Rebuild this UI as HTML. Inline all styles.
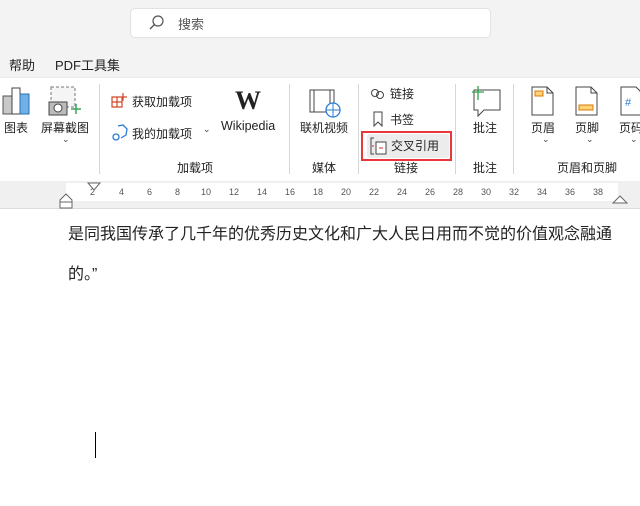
<!DOCTYPE html>
<html><head><meta charset="utf-8"><style>
*{margin:0;padding:0;box-sizing:border-box}
body{width:640px;height:506px;overflow:hidden;background:#fff;font-family:"Liberation Sans","Noto Sans CJK SC",sans-serif;color:#222;position:relative}
.a{position:absolute;white-space:nowrap}
.l{font-size:12px;color:#222}
.sep{position:absolute;width:1px;background:#d6d6d6;top:84px;height:90px}
.chev{font-size:9px;color:#444}
</style></head><body>
<div class="a" style="left:0;top:0;width:640px;height:78px;background:#f3f3f3"></div>
<div class="a" style="left:130px;top:8px;width:361px;height:30px;background:#fff;border:1px solid #e2e2e2;border-radius:5px"></div>
<svg class="a" style="left:148px;top:14px" width="18" height="18" viewBox="0 0 18 18"><circle cx="10" cy="7" r="5" fill="none" stroke="#555" stroke-width="1.2"/><line x1="6.5" y1="10.5" x2="2" y2="15" stroke="#555" stroke-width="1.3"/></svg>
<div class="a" style="left:178px;top:14px;font-size:13px;color:#555">搜索</div>
<div class="a" style="left:9px;top:55px;font-size:13px">帮助</div>
<div class="a" style="left:55px;top:55px;font-size:13px">PDF工具集</div>
<div class="a" style="left:0;top:78px;width:640px;height:103px;background:#fff;box-shadow:0 1px 3px rgba(0,0,0,.2)"></div>
<svg class="a" style="left:2px;top:86px" width="28" height="30"><rect x="1" y="10" width="9" height="18" fill="#c8c8c8" stroke="#555"/><rect x="10" y="2" width="8" height="26" fill="#fff" stroke="#444"/><rect x="18" y="8" width="9" height="20" fill="#6fb0e6" stroke="#2b6cb0"/></svg>
<div class="a l" style="left:4px;top:119px">图表</div>
<svg class="a" style="left:47px;top:86px" width="36" height="32"><rect x="4" y="1" width="24" height="20" fill="#f5f5f5" stroke="#777" stroke-dasharray="3,2"/><rect x="2" y="16" width="18" height="13" fill="#bbb" stroke="#444"/><circle cx="11" cy="22" r="4" fill="#fff" stroke="#444"/><path d="M24 23h10M29 18v10" stroke="#3aa35a" stroke-width="1.5"/></svg>
<div class="a l" style="left:41px;top:119px">屏幕截图</div>
<div class="a chev" style="left:62px;top:134px">⌄</div>
<div class="sep" style="left:99px"></div>
<svg class="a" style="left:111px;top:92px" width="17" height="17"><path d="M1 5h10v10H1zM1 10h10M6 5v10M12 1v8M8 5h8" fill="none" stroke="#d24726" stroke-width="1.2"/></svg>
<div class="a l" style="left:132px;top:93px">获取加载项</div>
<svg class="a" style="left:111px;top:124px" width="18" height="18"><path d="M7 2l5-1 4 4-1 6-5 3" fill="none" stroke="#2b7cd3" stroke-width="1.3"/><circle cx="5" cy="13" r="3" fill="none" stroke="#2b7cd3" stroke-width="1.3"/></svg>
<div class="a l" style="left:132px;top:125px">我的加载项</div>
<div class="a chev" style="left:203px;top:124px">⌄</div>
<div class="a" style="left:235px;top:86px;font-family:'Liberation Serif',serif;font-size:26px;font-weight:bold">W</div>
<div class="a l" style="left:221px;top:119px;font-size:12.5px">Wikipedia</div>
<div class="a l" style="left:177px;top:159px">加载项</div>
<div class="sep" style="left:289px"></div>
<svg class="a" style="left:308px;top:88px" width="34" height="32"><rect x="2" y="2" width="24" height="22" fill="#fff" stroke="#444"/><path d="M6 2v22M22 2v22" stroke="#444"/><circle cx="25" cy="22" r="7" fill="#fff" stroke="#2b7cd3" stroke-width="1.3"/><path d="M18 22h14M25 15v14" stroke="#2b7cd3"/></svg>
<div class="a l" style="left:300px;top:119px">联机视频</div>
<div class="a l" style="left:312px;top:159px">媒体</div>
<div class="sep" style="left:358px"></div>
<svg class="a" style="left:370px;top:88px" width="16" height="12"><circle cx="5" cy="5" r="3.5" fill="none" stroke="#444"/><circle cx="10" cy="7" r="3.5" fill="none" stroke="#444"/></svg>
<div class="a l" style="left:390px;top:85px">链接</div>
<svg class="a" style="left:373px;top:111px" width="10" height="16"><path d="M1 1h8v14l-4-4-4 4z" fill="none" stroke="#444"/></svg>
<div class="a l" style="left:390px;top:111px">书签</div>
<div class="a" style="left:361px;top:131px;width:91px;height:30px;border:2px solid #e8373a"></div>
<div class="a" style="left:367px;top:134px;width:82px;height:24px;background:#ececec;border-radius:3px"></div>
<svg class="a" style="left:370px;top:137px" width="18" height="18"><path d="M4 1h-3v16h3" fill="none" stroke="#444"/><rect x="6" y="5" width="10" height="12" fill="#fff" stroke="#444"/><path d="M9 11h4M2 9h2" stroke="#d23"/></svg>
<div class="a l" style="left:391px;top:137px">交叉引用</div>
<div class="a l" style="left:394px;top:159px">链接</div>
<div class="sep" style="left:455px"></div>
<svg class="a" style="left:468px;top:84px" width="34" height="34"><path d="M6 6h26v20H16l-6 6v-6H6z" fill="#fff" stroke="#444"/><path d="M4 8h12M10 2v14" stroke="#2ea34a" stroke-width="1.3"/></svg>
<div class="a l" style="left:473px;top:119px">批注</div>
<div class="a l" style="left:473px;top:159px">批注</div>
<div class="sep" style="left:513px"></div>
<svg class="a" style="left:531px;top:86px" width="24" height="30"><path d="M1 1h15l6 6v22H1z" fill="#fff" stroke="#444"/><path d="M16 1v6h6" fill="none" stroke="#444"/><rect x="4" y="5" width="8" height="5" fill="#fcd27a" stroke="#d97a00"/></svg>
<div class="a l" style="left:531px;top:119px">页眉</div>
<div class="a chev" style="left:542px;top:134px">⌄</div>
<svg class="a" style="left:575px;top:86px" width="24" height="30"><path d="M1 1h15l6 6v22H1z" fill="#fff" stroke="#444"/><path d="M16 1v6h6" fill="none" stroke="#444"/><rect x="4" y="19" width="14" height="5" fill="#fcd27a" stroke="#d97a00"/></svg>
<div class="a l" style="left:575px;top:119px">页脚</div>
<div class="a chev" style="left:586px;top:134px">⌄</div>
<svg class="a" style="left:620px;top:86px" width="24" height="30"><path d="M1 1h15l6 6v22H1z" fill="#fff" stroke="#444"/><text x="5" y="20" font-size="11" fill="#2b7cd3" font-family="Liberation Sans">#</text></svg>
<div class="a l" style="left:619px;top:119px">页码</div>
<div class="a chev" style="left:630px;top:134px">⌄</div>
<div class="a l" style="left:557px;top:159px">页眉和页脚</div>
<div class="a" style="left:0;top:181px;width:640px;height:28px;background:#f0f0f0;border-bottom:1px solid #dcdcdc"></div>
<div class="a" style="left:66px;top:183px;width:552px;height:18px;background:#fff"></div>
<div class="a" style="left:88px;top:187px;font-size:9px;color:#555;font-family:'Liberation Sans'">
<span style="position:absolute;left:2px">2</span><span style="position:absolute;left:31px">4</span><span style="position:absolute;left:59px">6</span><span style="position:absolute;left:87px">8</span><span style="position:absolute;left:113px">10</span><span style="position:absolute;left:141px">12</span><span style="position:absolute;left:169px">14</span><span style="position:absolute;left:197px">16</span><span style="position:absolute;left:225px">18</span><span style="position:absolute;left:253px">20</span><span style="position:absolute;left:281px">22</span><span style="position:absolute;left:309px">24</span><span style="position:absolute;left:337px">26</span><span style="position:absolute;left:365px">28</span><span style="position:absolute;left:393px">30</span><span style="position:absolute;left:421px">32</span><span style="position:absolute;left:449px">34</span><span style="position:absolute;left:477px">36</span><span style="position:absolute;left:505px">38</span></div>
<svg class="a" style="left:87px;top:182px" width="16" height="12"><path d="M1 1h12l-6 7z" fill="#fff" stroke="#666"/></svg>
<svg class="a" style="left:59px;top:193px" width="16" height="16"><path d="M1 7l6-6 6 6v8H1zM1 9h12" fill="#fff" stroke="#666"/></svg>
<svg class="a" style="left:612px;top:193px" width="18" height="12"><path d="M1 10l7-7 7 7z" fill="#fff" stroke="#666"/></svg>
<div class="a" style="left:68px;top:220px;font-size:16px;color:#222">是同我国传承了几千年的优秀历史文化和广大人民日用而不觉的价值观念融通</div>
<div class="a" style="left:68px;top:260px;font-size:16px;color:#222">的。”</div>
<div class="a" style="left:95px;top:432px;width:1px;height:26px;background:#000"></div>
</body></html>
